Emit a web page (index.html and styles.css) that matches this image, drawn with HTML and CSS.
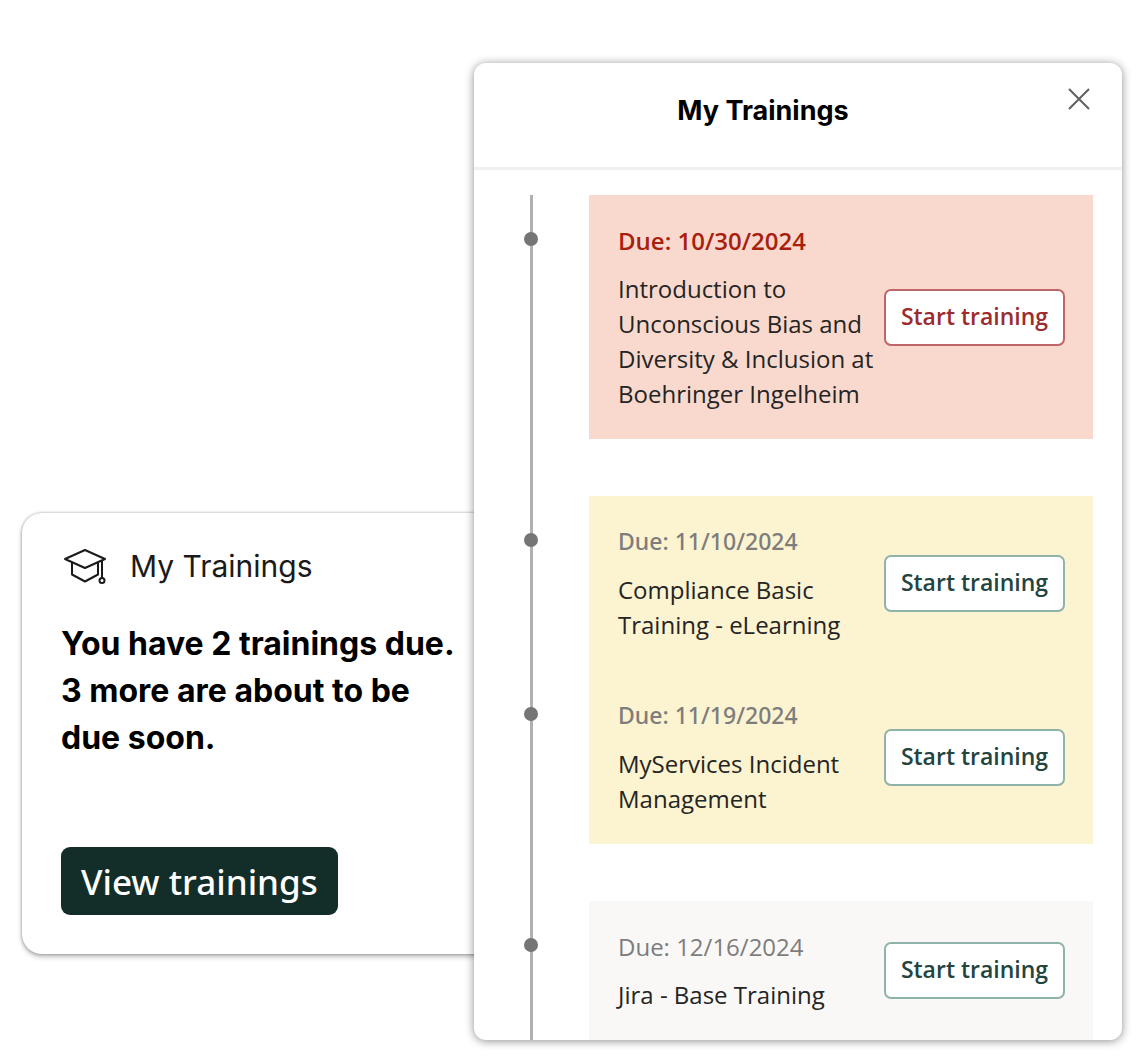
FILE: index.html
```html
<!DOCTYPE html>
<html lang="en">
<head>
<meta charset="utf-8">
<meta name="viewport" content="width=device-width, initial-scale=1">
<title>My Trainings</title>
<link rel="stylesheet" href="styles.css">
</head>
<body>
<main class="page">
  <section class="summary" aria-labelledby="summary-title">
    <header class="summary-header">
      <svg class="cap-icon" viewBox="0 0 44 38" aria-hidden="true">
        <path d="M2 12 22 3 42 12 22 21Z"/>
        <path d="M9 15.500V27.500L22 34.500 35 27.500V15.500"/>
        <path d="M39 13.500V31"/>
        <circle cx="39" cy="33.500" r="2.500"/>
      </svg>
      <h2 class="summary-title" id="summary-title">My Trainings</h2>
    </header>
    <p class="summary-text">You have 2 trainings due. 3 more are about to be due soon.</p>
    <button class="view-button" type="button">View trainings</button>
  </section>

  <section class="panel" aria-labelledby="panel-title">
    <header class="panel-header">
      <h1 class="panel-title" id="panel-title">My Trainings</h1>
      <button class="close-button" type="button" aria-label="Close">
        <svg class="close-icon" viewBox="0 0 22 22" aria-hidden="true"><path d="M1 1 21 21M21 1 1 21"/></svg>
      </button>
    </header>
    <div class="timeline">
      <ul class="group group-overdue">
        <li class="training">
          <div class="details">
            <p class="due">Due: 10/30/2024</p>
            <h3 class="name">Introduction to Unconscious Bias and Diversity &amp; Inclusion at Boehringer Ingelheim</h3>
          </div>
          <button class="start-button" type="button">Start training</button>
        </li>
      </ul>
      <ul class="group group-soon">
        <li class="training">
          <div class="details">
            <p class="due">Due: 11/10/2024</p>
            <h3 class="name">Compliance Basic Training - eLearning</h3>
          </div>
          <button class="start-button" type="button">Start training</button>
        </li>
        <li class="training">
          <div class="details">
            <p class="due">Due: 11/19/2024</p>
            <h3 class="name">MyServices Incident Management</h3>
          </div>
          <button class="start-button" type="button">Start training</button>
        </li>
      </ul>
      <ul class="group group-later">
        <li class="training">
          <div class="details">
            <p class="due">Due: 12/16/2024</p>
            <h3 class="name">Jira - Base Training</h3>
          </div>
          <button class="start-button" type="button">Start training</button>
        </li>
      </ul>
    </div>
  </section>
</main>
</body>
</html>
```

FILE: styles.css
```css
* {
  box-sizing: border-box;
}

body {
  margin: 0;
  background: #fff;
  color: #000;
  font-family: "Open Sans", "Noto Sans", sans-serif;
}

h1, h2, h3, p, ul {
  margin: 0;
  padding: 0;
}

button {
  font-family: inherit;
  cursor: pointer;
}

.page {
  display: grid;
  grid-template-columns: 452fr 648fr;
  padding: 63px 22px 21px;
}

/* Summary card, tucked under the left edge of the panel */
.summary {
  align-self: end;
  margin: 0 -24px 86px 0;
  padding: 31px 40px 39px 39px;
  border-radius: 20px;
  background: #fff;
  box-shadow: 0 0 3px rgba(0, 0, 0, 0.35), 0 3px 5px rgba(0, 0, 0, 0.25);
}

.summary-header {
  display: flex;
  align-items: center;
  gap: 23px;
  padding-left: 2px;
}

.cap-icon {
  width: 44px;
  height: 38px;
  fill: none;
  stroke: #1a1a1a;
  stroke-width: 2;
  stroke-linejoin: round;
}

.summary-title {
  font: 400 30px/44px Inter, sans-serif;
  color: #1a1a1a;
}

.summary-text {
  margin-top: 32px;
  font: 700 32px/47px Inter, sans-serif;
}

.view-button {
  display: block;
  margin-top: 86px;
  padding: 0 20px;
  height: 68px;
  border: 0;
  border-radius: 9px;
  background: #132e29;
  color: #fff;
  font-family: "Noto Sans", sans-serif;
  font-size: 35px;
  font-weight: 500;
}

/* Trainings panel */
.panel {
  position: relative;
  overflow: hidden;
  border-radius: 12px;
  background: #fff;
  box-shadow: 0 1px 10px rgba(0, 0, 0, 0.45);
}

.panel-header {
  display: flex;
  align-items: flex-start;
  padding: 20px 26px 32px 28px;
  border-bottom: 3px solid #f0f0f0;
}

.panel-title {
  flex: 1;
  padding-top: 4px;
  font: 700 27px/48px Inter, sans-serif;
  text-align: center;
}

.close-button {
  display: flex;
  align-items: center;
  justify-content: flex-end;
  width: 72px;
  height: 32px;
  padding: 0 6px 0 0;
  border: 0;
  background: none;
}

.close-icon {
  width: 22px;
  height: 22px;
  fill: none;
  stroke: #606060;
  stroke-width: 2;
}

.timeline {
  position: relative;
  display: flex;
  flex-direction: column;
  gap: 57px;
  margin-top: 25px;
  padding: 0 29px 0 115px;
}

.timeline::before {
  content: "";
  position: absolute;
  top: 0;
  bottom: 0;
  left: 56px;
  width: 3px;
  background: #b0b0b0;
}

.group {
  list-style: none;
}

.group-overdue {
  background: #f9d9cd;
}

.group-soon {
  background: #fcf3d0;
}

.group-later {
  background: #faf8f7;
}

.training {
  position: relative;
  display: flex;
  align-items: center;
  padding: 28px 28px 28px 29px;
}

.training::before {
  content: "";
  position: absolute;
  top: 37px;
  left: -65px;
  width: 14px;
  height: 14px;
  border-radius: 50%;
  background: #757575;
}

.details {
  flex: 1;
}

.due,
.name {
  font-size: 24px;
  line-height: 35px;
}

.due {
  margin-bottom: 13px;
  color: #7d7d7d;
}

.group-overdue .due {
  font-weight: 600;
  color: #a8200d;
}

.group-soon .due {
  font-family: "Noto Sans", sans-serif;
  font-size: 23px;
  font-weight: 500;
}

.name {
  font-weight: 400;
  color: #242424;
}

.start-button {
  flex: none;
  width: 181px;
  height: 57px;
  padding: 0 0 3px;
  border: 2px solid #8fb3a8;
  border-radius: 7px;
  background: #fff;
  color: #23443f;
  font-size: 23px;
  font-weight: 600;
}

.group-overdue .start-button {
  border-color: #bf6468;
  color: #9b2c2f;
}
```
